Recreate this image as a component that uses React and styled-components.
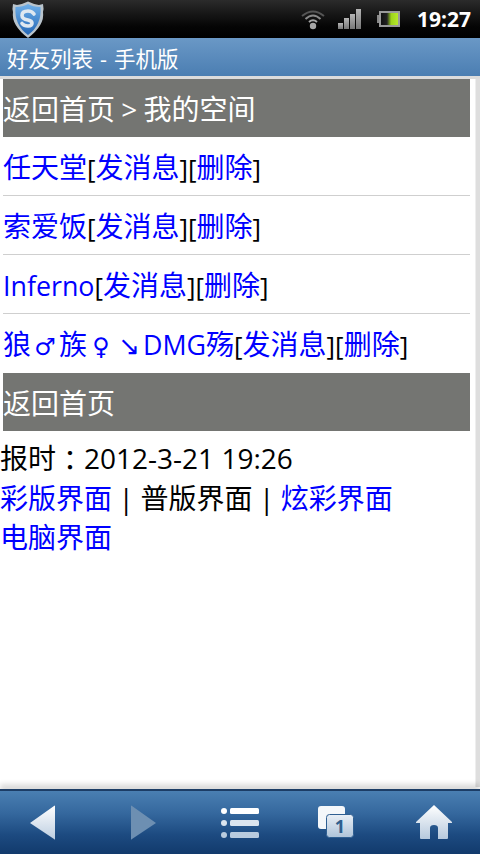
import styled, { createGlobalStyle } from 'styled-components'

const GlobalStyle = createGlobalStyle`
  html, body {
    margin: 0;
    padding: 0;
    background: #fff;
  }
  #root {
    height: 854px;
  }
`

const Screen = styled.div`
  width: 480px;
  height: 854px;
  display: flex;
  flex-direction: column;
  overflow: hidden;
  font-family: "Open Sans", "Noto Sans CJK SC", sans-serif;
`

const StatusBar = styled.div`
  height: 38px;
  flex: none;
  display: flex;
  align-items: center;
  padding: 0 9px 0 11px;
  background: linear-gradient(#2b2b2b 0%, #1a1a1a 30%, #050505 70%, #000 100%);
`

const StatusIcons = styled.div`
  margin-left: auto;
  display: flex;
  align-items: center;
`

const Clock = styled.span`
  margin-left: 17px;
  color: #fff;
  font-size: 21px;
  font-weight: 700;
`

const TitleBar = styled.div`
  height: 38px;
  flex: none;
  box-sizing: border-box;
  padding-left: 7px;
  display: flex;
  align-items: center;
  white-space: pre;
  color: #fff;
  font-size: 21.5px;
  word-spacing: 1.5px;
  background: linear-gradient(#6a98c6, #4b7eb2);
`

const Page = styled.div`
  flex: 1;
  position: relative;
  background: #fff;
  border-top: 3px solid #dcdcdc;
  display: flex;
  flex-direction: column;
  min-height: 0;
`

const Scrollbar = styled.div`
  position: absolute;
  top: 0;
  right: 0;
  width: 5px;
  height: 708px;
  background: #dedede;
  border-left: 1px solid #eee;
  box-sizing: border-box;
`

const Content = styled.div`
  width: 470px;
  font-size: 28px;
  color: #000;
`

const GrayBar = styled.div`
  height: 58px;
  margin-left: 3px;
  white-space: pre;
  word-spacing: -1px;
  background: #747572;
  color: #fff;
  font-size: 28px;
  line-height: 60px;
`

const Row = styled.div`
  height: 59px;
  margin-left: 3px;
  box-sizing: border-box;
  white-space: pre;
  line-height: 60px;
  border-bottom: ${props => (props.$last ? 'none' : '1px solid #cfcfcf')};
`

const Link = styled.a`
  color: #0000ff;
`

const Latin = styled.span`
  font-size: 26.8px;
`

const Bracket = styled.span`
  font-size: 26px;
`

const Glyph = styled.span`
  display: inline-block;
  width: 28px;
  text-align: center;
  font-family: "DejaVu Sans", sans-serif;
  font-size: ${props => props.$size || 24}px;
  line-height: 28px;
`

const FullColon = styled.span`
  font-family: "Noto Sans CJK TC", sans-serif;
  line-height: 1;
  vertical-align: -2px;
`

const Footer = styled.div`
  padding-top: 8px;
  line-height: 39px;
`

const ClockLine = styled.div`
  height: 40px;
`

const Sep = styled.span`
  padding: 0 6.5px;
`

const BottomBar = styled.div`
  height: 65px;
  flex: none;
  position: relative;
  display: grid;
  grid-template-columns: repeat(5, 96px);
  align-items: center;
  justify-items: center;
  box-sizing: border-box;
  border-top: 2px solid #1c3d66;
  box-shadow: 0 -5px 5px rgba(0, 0, 0, 0.14);
  background: linear-gradient(#4a7fb2 0%, #35689e 35%, #1c4a80 70%, #123a6c 100%);
`

const NavButton = styled.div`
  display: flex;
  align-items: center;
  justify-content: center;
  margin: ${props => props.$margin || '0'};
`

const ShieldLogo = () => (
  <svg width="34" height="38" viewBox="0 0 34 38" style={{ marginTop: 1 }}>
    <defs>
      <linearGradient id="sh" x1="0" y1="0" x2="0" y2="1">
        <stop offset="0" stopColor="#6fb0ea" />
        <stop offset="1" stopColor="#2467b5" />
      </linearGradient>
    </defs>
    <path d="M2 3 L6 4 Q12 3 17 0.5 Q22 3 28 4 L32 3 Q33 8 32 11 Q34 24 17 37 Q0 24 2 11 Q1 8 2 3Z" fill="#b9c4cc" />
    <path d="M4.5 6 Q12 6 17 3 Q22 6 29.5 6 Q31 24 17 34 Q3 24 4.5 6Z" fill="url(#sh)" />
    <path d="M23 13 Q21 10 17 10 Q11 10 11 14.5 Q11 18 17 19 Q21 20 21 22 Q21 25 17 25 Q13 25 11 22.5" fill="none" stroke="#dfe8f0" strokeWidth="3.6" strokeLinecap="round" />
  </svg>
)

const WifiIcon = () => (
  <svg width="24" height="22" viewBox="0 0 24 22">
    <path d="M1 8 Q12 -1 23 8" fill="none" stroke="#555" strokeWidth="2" />
    <path d="M4.5 11 Q12 4 19.5 11" fill="none" stroke="#8a8a8a" strokeWidth="2" />
    <path d="M8 14 Q12 10.5 16 14" fill="none" stroke="#a8a8a8" strokeWidth="2" />
    <circle cx="12" cy="18" r="3.2" fill="#a8a8a8" />
  </svg>
)

const SignalIcon = () => (
  <svg width="24" height="22" viewBox="0 0 24 22" style={{ marginLeft: 13 }}>
    <defs>
      <linearGradient id="bar" x1="0" y1="0" x2="0" y2="1">
        <stop offset="0" stopColor="#b5b5b5" />
        <stop offset="1" stopColor="#777" />
      </linearGradient>
    </defs>
    <rect x="0" y="15" width="5" height="6" fill="url(#bar)" />
    <rect x="6" y="10" width="5" height="11" fill="url(#bar)" />
    <rect x="12" y="6" width="5" height="15" fill="url(#bar)" />
    <rect x="18" y="1" width="5" height="20" fill="url(#bar)" />
  </svg>
)

const BatteryIcon = () => (
  <svg width="23" height="16" viewBox="0 0 23 16" style={{ marginLeft: 15 }}>
    <defs>
      <linearGradient id="bat" x1="0" y1="0" x2="1" y2="0">
        <stop offset="0" stopColor="#111" />
        <stop offset="0.35" stopColor="#222" />
        <stop offset="0.6" stopColor="#9dd41c" />
        <stop offset="1" stopColor="#b6e82a" />
      </linearGradient>
    </defs>
    <rect x="0" y="4" width="2" height="8" fill="#888" />
    <rect x="2" y="0" width="21" height="16" fill="#9a9a9a" />
    <rect x="4" y="2" width="17" height="12" fill="url(#bat)" />
  </svg>
)

const BackIcon = () => (
  <svg width="28" height="36" viewBox="0 0 28 36">
    <defs>
      <linearGradient id="navw" x1="0" y1="0" x2="0" y2="1">
        <stop offset="0" stopColor="#ffffff" />
        <stop offset="1" stopColor="#bccde0" />
      </linearGradient>
    </defs>
    <path d="M26 1 V34 Q26 35 25 34 L1 18 L25 1 Q26 0 26 1Z" fill="url(#navw)" />
  </svg>
)

const ForwardIcon = () => (
  <svg width="28" height="36" viewBox="0 0 28 36">
    <path d="M1 1 V34 Q1 35 2 34 L26 18 L2 1 Q1 0 1 1Z" fill="#6d8fb2" />
  </svg>
)

const ListIcon = () => (
  <svg width="38" height="32" viewBox="0 0 38 32">
    <circle cx="3" cy="4" r="3" fill="#fff" />
    <rect x="9" y="1" width="29" height="6" rx="1.5" fill="#fff" />
    <circle cx="3" cy="16" r="3" fill="#dbe5ef" />
    <rect x="9" y="13" width="29" height="6" rx="1.5" fill="#dbe5ef" />
    <circle cx="3" cy="28" r="3" fill="#b9cbde" />
    <rect x="9" y="25" width="29" height="6" rx="1.5" fill="#b9cbde" />
  </svg>
)

const TabsIcon = () => (
  <svg width="36" height="36" viewBox="0 0 36 36">
    <defs>
      <linearGradient id="tabb" x1="0" y1="0" x2="0" y2="1">
        <stop offset="0" stopColor="#e9eff6" />
        <stop offset="1" stopColor="#aec3d9" />
      </linearGradient>
    </defs>
    <rect x="0" y="1" width="27" height="23" rx="3" fill="#f4f7fa" />
    <rect x="8.5" y="9.5" width="27" height="23" rx="3" fill="url(#tabb)" stroke="#2f5f92" strokeWidth="1" />
    <text x="22" y="28" textAnchor="middle" fontSize="18" fontWeight="700" fontFamily="Open Sans" fill="#2f5f8e">1</text>
  </svg>
)

const HomeIcon = () => (
  <svg width="36" height="35" viewBox="0 0 36 35">
    <defs>
      <linearGradient id="home" x1="0" y1="0" x2="0" y2="1">
        <stop offset="0" stopColor="#ffffff" />
        <stop offset="1" stopColor="#b6c9dd" />
      </linearGradient>
    </defs>
    <path d="M18 0 L36 17 V18 H32 V33 Q32 34 31 34 H22 V23 Q22 20 18 20 Q14 20 14 23 V34 H5 Q4 34 4 33 V18 H0 V17Z" fill="url(#home)" />
  </svg>
)

const friends = [
  { id: 'rtt', name: '任天堂' },
  { id: 'sif', name: '索爱饭' },
  { id: 'inf', name: <Latin>Inferno</Latin> },
  {
    id: 'lang',
    last: true,
    name: (
      <>
        狼<Glyph>♂</Glyph>族<Glyph>♀</Glyph><Glyph $size={26}>↘</Glyph><Latin>DMG</Latin>殇
      </>
    ),
  },
]

export default function App() {
  return (
    <Screen>
      <GlobalStyle />
      <StatusBar>
        <ShieldLogo />
        <StatusIcons>
          <WifiIcon />
          <SignalIcon />
          <BatteryIcon />
          <Clock>19:27</Clock>
        </StatusIcons>
      </StatusBar>
      <TitleBar>好友列表 - 手机版</TitleBar>
      <Page>
        <Scrollbar />
        <Content>
          <GrayBar>返回首页 &gt; 我的空间</GrayBar>
          {friends.map(f => (
            <Row key={f.id} $last={f.last}>
              <Link>{f.name}</Link><Bracket>[</Bracket><Link>发消息</Link><Bracket>][</Bracket><Link>删除</Link><Bracket>]</Bracket>
            </Row>
          ))}
          <GrayBar>返回首页</GrayBar>
          <Footer>
            <ClockLine>报时<FullColon>：</FullColon>2012-3-21 19:26</ClockLine>
            <div>
              <Link>彩版界面</Link><Sep>|</Sep>普版界面<Sep>|</Sep><Link>炫彩界面</Link>
            </div>
            <div><Link>电脑界面</Link></div>
          </Footer>
        </Content>
      </Page>
      <BottomBar>
        <NavButton $margin="0 10px 0 0"><BackIcon /></NavButton>
        <NavButton><ForwardIcon /></NavButton>
        <NavButton><ListIcon /></NavButton>
        <NavButton><TabsIcon /></NavButton>
        <NavButton $margin="0 0 0 4px"><HomeIcon /></NavButton>
      </BottomBar>
    </Screen>
  )
}
